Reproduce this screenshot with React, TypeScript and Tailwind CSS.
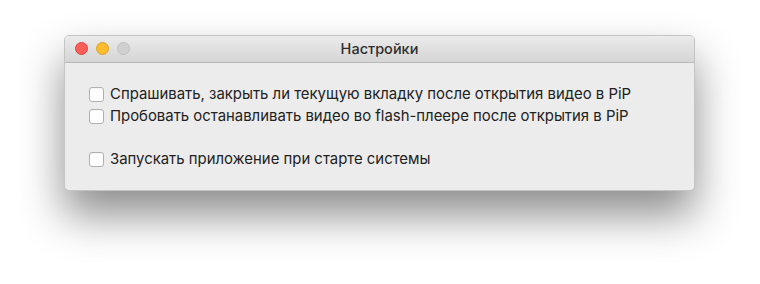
import React from "react";

function Box() {
  return (
    <span className="w-[15px] h-[15px] shrink-0 rounded-[3px] border border-[#b0b0b0] bg-white shadow-[inset_0_1px_0_rgba(0,0,0,0.04)]" />
  );
}

function Row({ label }: { label: string }) {
  return (
    <label className="flex items-center gap-[6px] h-[22px]">
      <Box />
      <span>{label}</span>
    </label>
  );
}

export default function App() {
  return (
    <div className="w-[760px] h-[284px] bg-white overflow-hidden pt-[35px] pl-[64px]" style={{ fontFamily: "Inter, 'Noto Sans', sans-serif" }}>
      <div className="w-[631px] h-[156px] rounded-[5px] bg-[#ececec] border border-[#c4c4c4] shadow-[0_24px_44px_rgba(0,0,0,0.45)] overflow-hidden flex flex-col">
        <div className="h-[27px] shrink-0 relative flex items-center justify-center bg-gradient-to-b from-[#ebebeb] to-[#d5d5d5] border-b border-[#b9b9b9]">
          <div className="absolute left-[10px] top-[6px] flex gap-[8px]">
            <span className="w-[13px] h-[13px] rounded-full bg-[#fc5f57] border border-[#e0443e]" />
            <span className="w-[13px] h-[13px] rounded-full bg-[#fdbc2e] border border-[#dea123]" />
            <span className="w-[13px] h-[13px] rounded-full bg-[#d0d0d0] border border-[#c0c0c0]" />
          </div>
          <span className="text-[14.5px] font-medium text-[#2e2e2e]">Настройки</span>
        </div>
        <div className="flex flex-col pl-[24px] pt-[20px] text-[14.9px] text-[#222] leading-[22px]">
          <Row label="Спрашивать, закрыть ли текущую вкладку после открытия видео в PiP" />
          <Row label="Пробовать останавливать видео во flash-плеере после открытия в PiP" />
          <div className="h-[21px]" />
          <Row label="Запускать приложение при старте системы" />
        </div>
      </div>
    </div>
  );
}
